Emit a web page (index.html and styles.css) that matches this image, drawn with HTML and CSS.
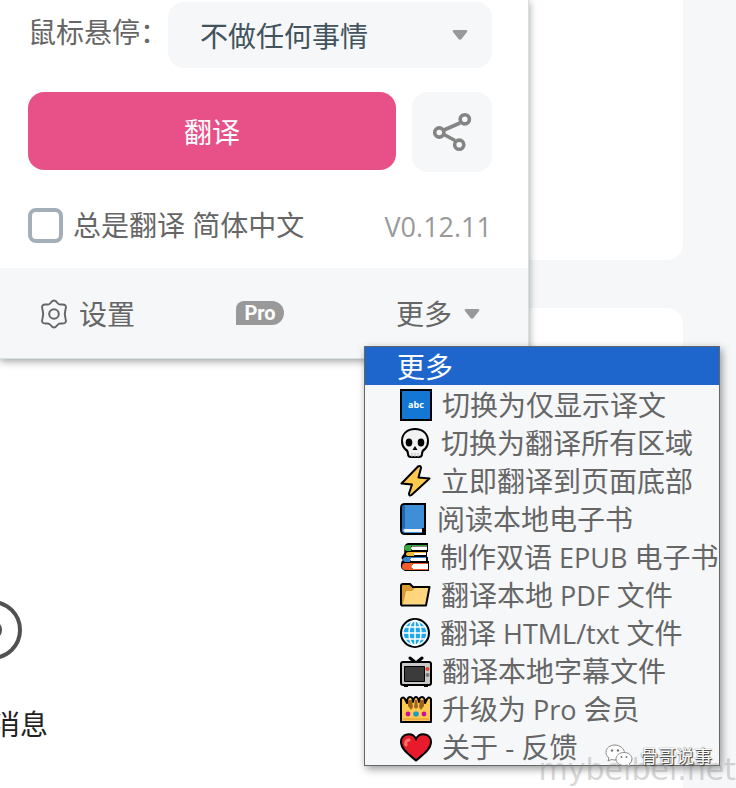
FILE: index.html
```html
<!DOCTYPE html>
<html lang="zh-CN">
<head>
    <meta charset="UTF-8">
    <meta name="viewport" content="width=device-width, initial-scale=1.0">
    <title>翻译</title>
    <link rel="stylesheet" href="styles.css">
</head>
<body>
    <main class="page">
        <section class="card"></section>
        <section class="card card-messages">
            <div class="message-tab">
                <svg class="message-icon" width="62" height="62" viewBox="0 0 62 62" fill="none" stroke="#505153" stroke-width="4">
                    <circle cx="31" cy="31" r="28"/>
                    <circle cx="31" cy="31" r="8" fill="#505153"/>
                </svg>
                <span>消息</span>
            </div>
        </section>
    </main>

    <div class="popup">
        <form class="popup-body">
            <div class="row">
                <label for="hover-action">鼠标悬停：</label>
                <div class="select-wrap">
                    <select id="hover-action">
                        <option>不做任何事情</option>
                    </select>
                    <svg class="arrow" width="16" height="10" viewBox="0 0 16 10"><path d="M2 0h12q2 0 1 2L9.500 9q-1.500 1.500-3 0L1 2Q0 0 2 0z" fill="#999"/></svg>
                </div>
            </div>
            <div class="row actions">
                <button type="button" class="translate-btn">翻译</button>
                <button type="button" class="share-btn" aria-label="分享">
                    <svg width="40" height="40" viewBox="0 0 40 40" fill="none" stroke="#848484" stroke-width="3.600">
                        <path d="M12 18l16-7M12 22.500l11 6"/>
                        <circle cx="7.300" cy="20.500" r="4.600"/>
                        <circle cx="32.800" cy="7.300" r="4.600"/>
                        <circle cx="27.200" cy="32.700" r="4.600"/>
                    </svg>
                </button>
            </div>
            <div class="row always">
                <input type="checkbox" id="always">
                <label for="always">总是翻译 简体中文</label>
                <span class="version">V0.12.11</span>
            </div>
        </form>
        <footer class="popup-footer">
            <button type="button" class="footer-btn">
                <svg width="28" height="30" viewBox="0 0 28 30" fill="none" stroke="#666" stroke-width="2">
                    <path d="M10.500 4Q14-1 17.500 4q1.500 2 4 1.500 6-.5 4 5-1.500 4.500 0 9 2 5.500-4 5-2.500-.5-4 1.500-3.500 5-7 0-1.500-2-4-1.500-6 .5-4-5 1.500-4.500 0-9-2-5.500 4-5 2.500.5 4-1.500z"/>
                    <circle cx="14" cy="15" r="4.800"/>
                </svg>
                设置
            </button>
            <span class="pro-badge">Pro</span>
            <button type="button" class="footer-btn more-btn" aria-haspopup="menu" aria-expanded="true">
                更多
                <svg width="16" height="10" viewBox="0 0 16 10"><path d="M2 0h12q2 0 1 2L9.500 9q-1.500 1.500-3 0L1 2Q0 0 2 0z" fill="#999"/></svg>
            </button>
        </footer>
    </div>

    <ul class="menu">
        <li><button type="button" class="active">更多</button></li>
        <li><button type="button">
            <svg width="32" height="32" viewBox="0 0 32 32"><path fill="#1477d4" stroke="#000" stroke-width="2" d="M1 1h30v30H1z"/><text x="16" y="19" class="abc">abc</text></svg>
            <span>切换为仅显示译文</span></button></li>
        <li><button type="button">
            <svg width="31" height="32" viewBox="0 0 31 32">
                <path fill="#f2f2f2" stroke="#000" stroke-width="2" d="M15 2C7 2 2 7 2 14c0 4 1 6 3 8 2 1 3 2 3 5 0 2 1 3 3 3h8c2 0 3-1 3-3 0-3 1-4 3-5 2-2 3-4 3-8C28 7 23 2 15 2z"/>
                <ellipse cx="9" cy="15.500" rx="3.300" ry="4"/><ellipse cx="21" cy="15.500" rx="3.300" ry="4"/>
                <path d="M15 19l2.500 4h-5z"/><path d="M12 26v4M15 26v4M18 26v4" stroke="#bbb"/>
            </svg>
            <span>切换为翻译所有区域</span></button></li>
        <li><button type="button">
            <svg width="31" height="32" viewBox="0 0 31 32"><path fill="#ffc84f" stroke="#000" stroke-width="2" stroke-linejoin="round" d="M18 1.500L1.500 18.500l10.500 1L9 28.500q0 3 2.500 1.500L29.500 13.500l-11-1L21 3q0-3-3-1.500z"/></svg>
            <span>立即翻译到页面底部</span></button></li>
        <li><button type="button">
            <svg width="27" height="32" viewBox="0 0 27 32"><path fill="#3f8fd8" stroke="#000" stroke-width="2" d="M5 1h20v30H5q-4 0-4-4V5q0-4 4-4z"/><path fill="#2168b0" d="M2 5q0-3 3-3v23q-3 0-3 2z"/><path fill="#f5f5f5" d="M5 26h17v3H5q-3-1.500 0-3z"/><path stroke="#000" stroke-width="2" d="M23 25v5"/></svg>
            <span>阅读本地电子书</span></button></li>
        <li><button type="button">
            <svg width="30" height="30" viewBox="0 0 30 30">
                <path d="M8 1h20v9h-1v5h1v4h1v10H5q-5-2-4-7 0-3 2-4-3-2 0-5 2-2 1-6 0-5 4-6z"/>
                <path fill="#35a83c" d="M27 3H8Q4 3 4 6t4 3h3V4h16z"/><path fill="#fff" d="M12 4.500h15v3.500H12q-2-1.800 0-3.500z"/>
                <path fill="#f0b83a" d="M26 10H9q-3 0-3 2t3 2h5v-3h12z"/><path fill="#fff" d="M14 11h12v2H14z"/>
                <path fill="#3688d4" d="M26 15H6q-3 0-3 2.500T6 20h4v-4h16z"/><path fill="#fff" d="M11 16h15v3H11q-2-1.500 0-3z"/>
                <path fill="#f15a29" d="M28 21H5q-3 0-3 3.500T5 28h23v-1H12v-5h16z"/><path fill="#fff" d="M13 22h15v5H13q-3-2.500 0-5z"/>
            </svg>
            <span>制作双语<span class="latin"> EPUB </span>电子书</span></button></li>
        <li><button type="button">
            <svg width="31" height="24" viewBox="0 0 31 24"><path fill="#d99a32" stroke="#000" stroke-width="2" d="M1 22.500V3q0-2 2-2h7l3 3h12v4"/><path fill="#ffd57d" d="M3 21.500L6 8h6l3-3h14L25.500 21.500z"/><path fill="none" stroke="#000" stroke-width="2" stroke-linejoin="round" d="M12 4h17.500L26 22.500H1"/></svg>
            <span>翻译本地<span class="latin"> PDF </span>文件</span></button></li>
        <li><button type="button">
            <svg width="30" height="30" viewBox="0 0 30 30"><circle cx="15" cy="15" r="14" fill="#20a8e8" stroke="#000" stroke-width="2"/><g fill="none" stroke="#fff" stroke-width="1.500"><circle cx="15" cy="15" r="12"/><ellipse cx="15" cy="15" rx="6" ry="12.500"/><path d="M15 2.500v25M2.500 15h25M4.500 9h21M4.500 21h21"/></g></svg>
            <span>翻译<span class="latin"> HTML/txt </span>文件</span></button></li>
        <li><button type="button">
            <svg width="32" height="31" viewBox="0 0 32 31"><path fill="none" stroke="#000" stroke-width="3" stroke-linecap="round" d="M10 2l6 5 6-5"/><rect x="1" y="6" width="30" height="23" rx="2" fill="#c9c9c9" stroke="#000" stroke-width="2"/><path d="M4 28v3h4v-3M24 28v3h4v-3"/><path fill="#3b3b3b" stroke="#000" d="M4.500 10.500h20v15h-20z"/><circle cx="27.500" cy="13" r="2" fill="#e8402c"/><circle cx="27.500" cy="19" r="2" fill="#777"/></svg>
            <span>翻译本地字幕文件</span></button></li>
        <li><button type="button">
            <svg width="32" height="27" viewBox="0 0 32 27"><path fill="#ffc84f" stroke="#000" stroke-width="2" stroke-linejoin="round" d="M1 26V3q2-3 4 0l2 4q0-6 3-6t3 5q1-5 3-5t3 5q0-5 3-5t3 6l2-4q2-3 4 0v23z"/><path fill="#9b6420" d="M8 4h4l1 7-2 3-3-4zM20 4h4v6l-3 4-2-3zM15 4h2l1 7-2 2-2-2z"/><circle cx="8" cy="18" r="2.400" fill="#c8109a"/><circle cx="16" cy="18" r="2.800" fill="#1c9fc4"/><circle cx="24" cy="18" r="2.400" fill="#c8109a"/><path stroke="#d9942a" d="M3 23h26"/></svg>
            <span>升级为<span class="latin"> Pro </span>会员</span></button></li>
        <li><button type="button">
            <svg width="32" height="29" viewBox="0 0 32 29"><path fill="#e81b2c" stroke="#000" stroke-width="2" d="M16 27.500C11 23 1 17 1 9c0-8 11-11 15-3 4-8 15-5 15 3 0 8-10 14-15 18.500z"/><path fill="none" stroke="#ff7268" stroke-width="3" stroke-linecap="round" d="M6 12q-1-5 3-5"/></svg>
            <span>关于 - 反馈</span></button></li>
    </ul>

    <div class="site-mark">mybeibei.net</div>
    <div class="account-mark">
        <svg width="28" height="24" viewBox="0 0 28 24" fill="#fff" stroke="#888" stroke-width="1">
            <path d="M10 1C5 1 1 4 1 8.500c0 2.500 1 4 3 5.500l-1 3 3.500-1.500q2 .5 4.500.5c5 0 8.500-3 8.500-7S15 1 10 1z"/>
            <path d="M19 8.500c-4.500 0-8 3-8 6.500s3.500 6.500 8 6.500l3-.5 3 1.500-.5-2.500q2.500-2 2.500-5c0-3.500-3.500-6.500-8-6.500z"/>
            <g fill="#777" stroke="none"><circle cx="7" cy="6.500" r="1.200"/><circle cx="13" cy="6.500" r="1.200"/><circle cx="16.500" cy="13" r="1"/><circle cx="21.500" cy="13" r="1"/></g>
        </svg>
        <span>骨哥说事</span>
    </div>
</body>
</html>
```
FILE: styles.css
```css
* {
    box-sizing: border-box;
}
body {
    margin: 0;
    min-height: 100vh;
    background-color: #f5f7f9;
    color: #666;
    font-family: "Open Sans", "Noto Sans CJK SC", sans-serif;
    font-size: 28px;
    line-height: 38px;
    overflow: hidden;
}
button, select {
    font: inherit;
    color: inherit;
    border: none;
    background: none;
    padding: 0;
    cursor: pointer;
}
svg {
    flex: none;
}

/* page behind the popup */
.page {
    display: flex;
    flex-direction: column;
    gap: 48px;
    height: 100vh;
    padding-right: 53px;
}
.card {
    flex: none;
    height: 260px;
    background-color: white;
    border-radius: 0 0 16px 0;
}
.card-messages {
    flex: 1;
    border-radius: 0 16px 0 0;
    padding-top: 291px;
}
.message-tab {
    display: flex;
    flex-direction: column;
    align-items: flex-start;
    gap: 44px;
    margin-left: -8px;
    color: #222;
}
.message-icon {
    margin-left: -31px;
}

/* extension popup */
.popup {
    position: absolute;
    top: 0;
    left: 0;
    width: 529px;
    background-color: white;
    border-right: 1px solid #d5e0e5;
    border-bottom: 1px solid #d5e0e5;
    box-shadow: 0 2px 8px rgba(0,0,0,0.4);
}
.popup-body {
    display: flex;
    flex-direction: column;
    gap: 24px;
    padding: 2px 36px 24px 28px;
}
.row {
    display: flex;
}
.row > label {
    white-space: nowrap;
}
.row:first-child > label {
    width: 140px;
    padding-top: 11px;
}
.select-wrap {
    position: relative;
    flex: 1;
}
.select-wrap select {
    appearance: none;
    width: 100%;
    height: 66px;
    padding: 2px 32px 0;
    border-radius: 16px;
    background-color: #f5f7f9;
    color: #43535e;
}
.arrow {
    position: absolute;
    right: 24px;
    top: 28px;
    pointer-events: none;
}
.actions {
    gap: 16px;
}
.translate-btn {
    flex: 1;
    height: 78px;
    padding-top: 2px;
    border-radius: 16px;
    background-color: #e85088;
    color: white;
}
.share-btn {
    display: flex;
    align-items: center;
    justify-content: center;
    width: 80px;
    height: 80px;
    border-radius: 16px;
    background-color: #f5f7f9;
}
.always {
    align-items: center;
    gap: 10px;
    height: 48px;
    padding-top: 10px;
}
.always input {
    appearance: none;
    width: 35px;
    height: 35px;
    margin: 0;
    border: 4px solid #a2afb9;
    border-radius: 8px;
}
.version {
    margin-left: auto;
    padding-top: 4px;
    font-size: 27px;
    color: #999;
}
.popup-footer {
    display: flex;
    align-items: center;
    height: 90px;
    padding: 0 48px 0 40px;
    background-color: #f5f7f9;
}
.footer-btn {
    display: flex;
    align-items: center;
    gap: 11px;
    padding-top: 2px;
}
.more-btn {
    gap: 12px;
}
.pro-badge {
    width: 48px;
    margin: 0 auto 0 101px;
    border-radius: 8px 12px 12px 0;
    background-color: #999;
    color: white;
    font-family: Roboto, sans-serif;
    font-size: 20px;
    font-weight: bold;
    line-height: 24px;
    text-align: center;
}

/* open menu */
.menu {
    position: absolute;
    top: 346px;
    left: 364px;
    width: 356px;
    margin: 0;
    padding: 0;
    list-style: none;
    border: 1px solid #666;
    background-color: #f5f7f9;
    box-shadow: 2px 3px 8px rgba(0,0,0,0.4);
}
.menu button {
    display: flex;
    align-items: center;
    gap: 10px;
    width: 100%;
    height: 38px;
    padding: 2px 0 0 35px;
    white-space: nowrap;
}
.menu .active {
    padding-left: 32px;
    background-color: #1e66cc;
    color: white;
}
.latin {
    font-size: 27px;
}
.abc {
    fill: white;
    font-size: 9px;
    font-weight: bold;
    text-anchor: middle;
}

/* watermarks */
.site-mark {
    position: absolute;
    right: 0;
    bottom: 0;
    font-family: "DejaVu Sans", sans-serif;
    font-size: 30px;
    line-height: 36px;
    color: rgba(140,140,140,0.35);
}
.account-mark {
    position: absolute;
    right: 24px;
    bottom: 16px;
    display: flex;
    align-items: center;
    gap: 7px;
    font-size: 18px;
    line-height: 32px;
    color: white;
    text-shadow: 1px 1px 1px #333, 0 0 1px #333;
}
```
